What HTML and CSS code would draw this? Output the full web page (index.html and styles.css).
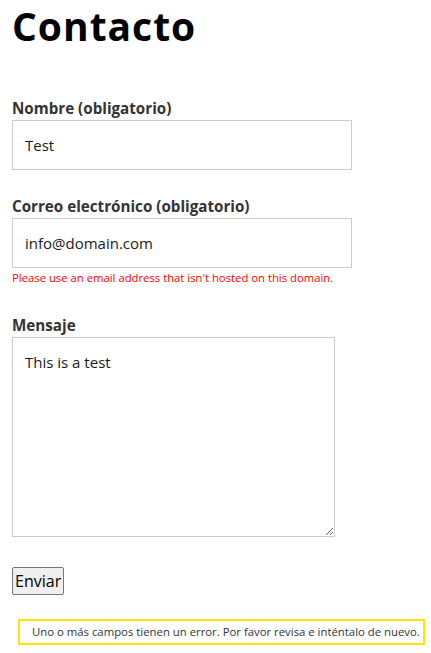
FILE: index.html
```html
<!DOCTYPE html>
<html lang="es">
<head>
<meta charset="utf-8">
<title>Contacto</title>
<link rel="stylesheet" href="styles.css">
</head>
<body>
<main class="page">
  <h1 class="title">Contacto</h1>
  <form class="form" novalidate>
    <div class="field">
      <label class="label" for="nombre">Nombre (obligatorio)</label>
      <input class="input" id="nombre" type="text" value="Test">
    </div>
    <div class="field field-error">
      <label class="label" for="correo">Correo electrónico (obligatorio)</label>
      <input class="input" id="correo" type="email" value="info@domain.com">
      <span class="tip">Please use an email address that isn't hosted on this domain.</span>
    </div>
    <div class="field">
      <label class="label" for="mensaje">Mensaje</label>
      <textarea class="textarea" id="mensaje">This is a test</textarea>
    </div>
    <div class="actions">
      <button class="submit" type="button">Enviar</button>
    </div>
    <div class="response">Uno o más campos tienen un error. Por favor revisa e inténtalo de nuevo.</div>
  </form>
</main>
</body>
</html>
```

FILE: styles.css
```css
* {
  box-sizing: border-box;
}

html, body {
  margin: 0;
  padding: 0;
  background: #ffffff;
}

body {
  font-family: "Open Sans", "Noto Sans", sans-serif;
  color: #333333;
}

.page {
  padding: 0 6px 0 12px;
}

.title {
  margin: 0;
  font-size: 39px;
  line-height: 52px;
  font-weight: 700;
  letter-spacing: 1px;
  color: #000000;
}

.form {
  margin-top: 44px;
  display: flex;
  flex-direction: column;
}

.field {
  display: flex;
  flex-direction: column;
  align-items: flex-start;
  margin-bottom: 24px;
}

.field-error {
  margin-bottom: 26px;
}

.label {
  font-size: 15.2px;
  line-height: 24px;
  font-weight: 700;
  color: #333333;
}

.input,
.textarea {
  display: block;
  margin: 0;
  border: 1px solid #cccccc;
  border-radius: 0;
  background: #ffffff;
  padding: 12px;
  font-family: "Open Sans", "Noto Sans", sans-serif;
  font-size: 15px;
  line-height: 24px;
  color: #1a1a1a;
  outline: none;
}

.input {
  width: 340px;
  height: 50px;
}

.textarea {
  width: 323px;
  height: 200px;
  resize: both;
}

.tip {
  display: block;
  font-size: 11.3px;
  line-height: 19px;
  color: #ff0000;
}

.actions {
  margin-top: 6px;
  display: flex;
}

.submit {
  margin: 0;
  height: 28px;
  padding: 1px 2px;
  border: 1px solid #767676;
  border-radius: 2px;
  background: #efefef;
  font-family: "Open Sans", "Noto Sans", sans-serif;
  font-size: 16px;
  line-height: 24px;
  color: #000000;
}

.response {
  margin: 24px 0 0 6px;
  border: 2px solid #ffe600;
  padding: 2px 6px 2px 12px;
  font-size: 11.35px;
  line-height: 18px;
  white-space: nowrap;
  color: #333333;
}
```
